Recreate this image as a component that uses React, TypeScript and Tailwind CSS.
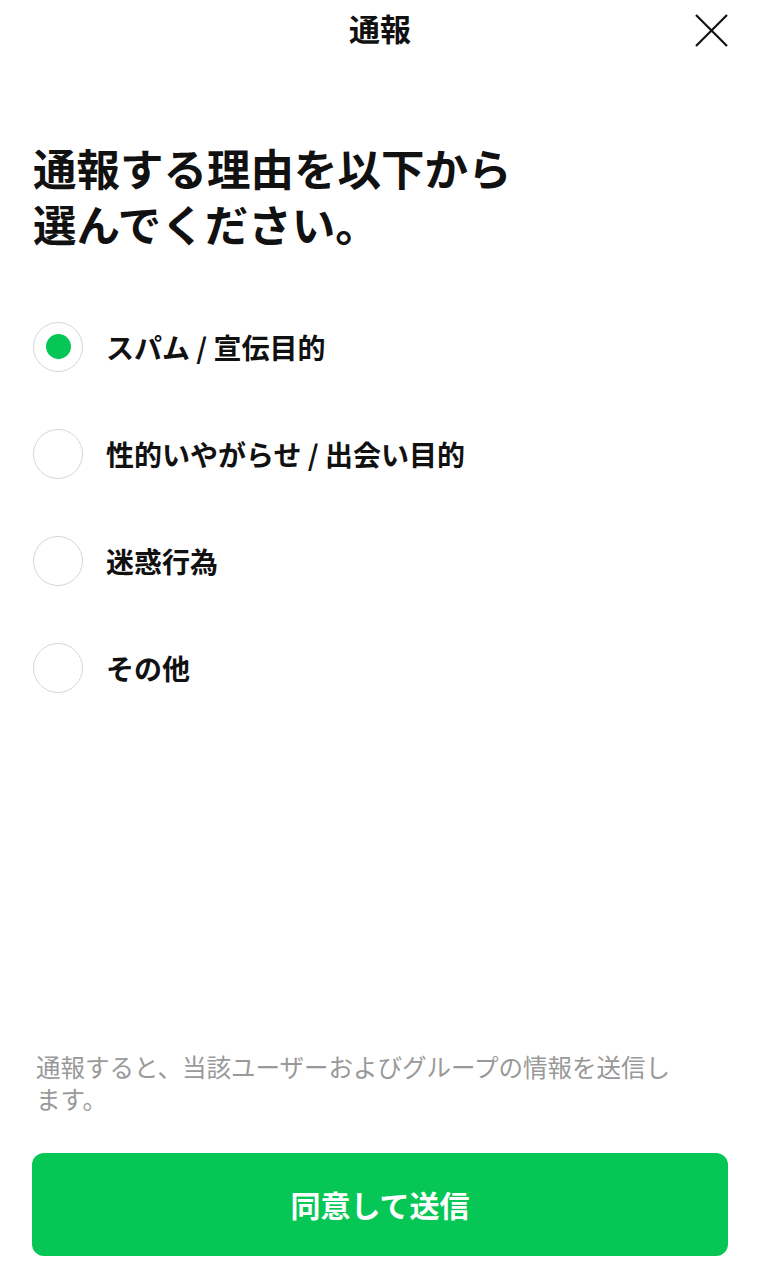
import React, { useState } from "react";

const options = [
  "スパム / 宣伝目的",
  "性的いやがらせ / 出会い目的",
  "迷惑行為",
  "その他",
];

export default function App() {
  const [selected, setSelected] = useState(0);
  return (
    <div
      className="flex h-[1281px] w-[760px] flex-col bg-white text-[#111111]"
      style={{ fontFamily: '"Noto Sans CJK JP", "Noto Sans", sans-serif' }}
    >
      <header className="relative flex h-[60px] items-center justify-center pb-[6px]">
        <h1 className="text-[31px] font-bold leading-none">通報</h1>
        <button className="absolute right-[32px] top-[14px] h-[33px] w-[33px]">
          <svg viewBox="0 0 33 33" className="h-[33px] w-[33px]">
            <path d="M1 1 L32 32 M32 1 L1 32" stroke="#111" strokeWidth="2.2" fill="none" />
          </svg>
        </button>
      </header>

      <h2 className="mt-[80px] px-[33px] text-[43.5px] font-bold leading-[56px]">
        <span className="block">通報する理由を以下から</span>
        <span className="block">選んでください。</span>
      </h2>

      <ul className="mt-[41px] px-[33px]">
        {options.map((label, i) => (
          <li
            key={label}
            className="flex h-[107px] cursor-pointer items-center"
            onClick={() => setSelected(i)}
          >
            <span className="flex h-[50px] w-[50px] shrink-0 items-center justify-center rounded-full border border-[#d6d6d6]">
              {selected === i && (
                <span className="h-[25px] w-[25px] rounded-full bg-[#06c755]" />
              )}
            </span>
            <span className="ml-[23px] text-[28px] font-bold leading-none">{label}</span>
          </li>
        ))}
      </ul>

      <div className="flex-1" />

      <p className="w-[690px] px-[36px] text-[24.5px] leading-[32px] text-[#999999]">
        <span className="block w-[650px]">
          通報すると、当該ユーザーおよびグループの情報を送信します。
        </span>
      </p>

      <div className="mb-[25px] mt-[38px] px-[32px]">
        <button className="flex h-[103px] w-full items-center justify-center rounded-[12px] bg-[#06c755] text-[30px] font-bold text-white">
          同意して送信
        </button>
      </div>
    </div>
  );
}
